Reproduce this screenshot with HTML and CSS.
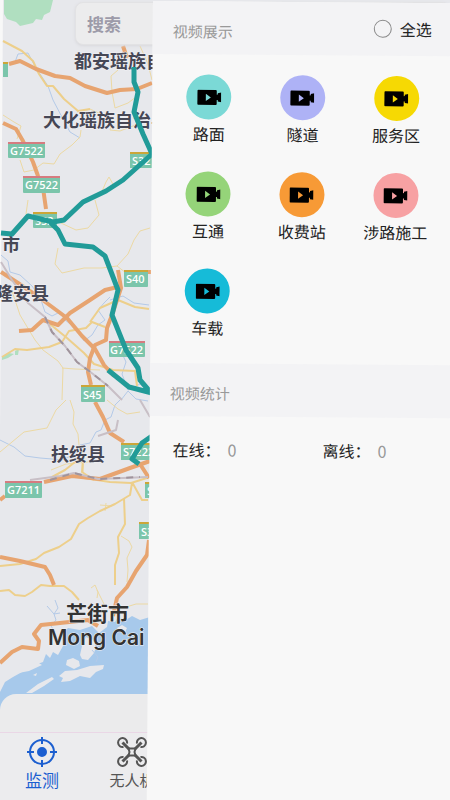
FILE: index.html
```html
<!DOCTYPE html>
<html lang="zh-CN">
<head>
  <meta charset="UTF-8" />
  <meta name="viewport" content="width=device-width, initial-scale=1.0" />
  <title>监测</title>
  <link rel="stylesheet" href="styles.css">
</head>
<body>
  <svg width="0" height="0" class="defs" aria-hidden="true">
    <symbol id="camera" viewBox="0 0 24 16">
      <path fill-rule="evenodd" d="M1 0.5H18.5Q19.5 .5 19.5 1.5V5.2L20.5 5V3.8L24 3V12.6L20.5 12V10.6H19.5V14.5Q19.5 15.5 18.5 15.5H1Q0 15.5 0 14.5V1.5Q0 .5 1 .5ZM8.6 4.4V11.6L13.6 8Z" />
    </symbol>
  </svg>

  <div class="screen">
    <!-- map -->
    <svg class="map" viewBox="0 0 450 800" preserveAspectRatio="xMinYMin slice" role="img" aria-label="地图">
      <path class="land" d="M3 0H450V800H0V430Z" />
      <path class="park" d="M4 0H53L50 12 44 15 42 20 36 19 33 23 20 26 16 22 7 19 4 14Z" />
      <path class="park" d="M2 357L9 353 14 354 8 358 2 360ZM15 351L19 349 18 355 15 355Z" />

      <!-- sea and islands -->
      <path class="sea" d="M0 710V692L5 682 13 677 22 672 32 666 43 662 46 654 50 658 53 652 58 655 63 646 62 634 68 628 80 630 92 626 99 633 107 627 108 621 115 622 118 617 126 620 132 616 140 620 150 617V710Z" />
      <path class="land" d="M66 665L67 660 73 658 79 661 80 666 74 669ZM80 655L82 646 86 637 93 640 96 647 94 653 88 660 82 659ZM59 676L65 671 77 670 90 666 104 665 103 669 96 672 90 678 80 676 70 681 61 682 63 678ZM26 693L38 684 52 677 54 679 44 686 32 693ZM13 674L20 663 34 660 42 665 29 671ZM33 675L37 673 36 676ZM117 628L122 625 127 628 125 632 119 632Z" />

      <!-- rivers -->
      <g class="river">
        <path d="M15 62L18 54 28 53 36 68 48 86 53 100 64 121 70 132 80 138" />
        <path d="M1 255L8 261 10 272 20 275 32 286 40 297 45 312 52 316 60 312 65 320 78 330 84 341 92 335 98 325 105 320 98 310 104 303 110 297" />
        <path d="M0 440L14 447 25 456 40 458 52 459 62 460 75 454 80 445 90 443 96 432 101 430 105 420 111 417 115 405 120 400" />
        <path d="M55 600L58 608 54 614 56 620 51 626 55 632M47 606L54 614 60 613M92 650L98 657 96 662" />
        <path d="M120 349L126 362 122 374 128 390 140 384 150 392M121 400L128 391 136 399 148 401M110 300L123 296 134 303 149 305" />
      </g>

      <!-- minor roads -->
      <g class="lane">
        <path d="M3 115L14 122 21 126 17 139M20 160L24 172 34 170 43 163 54 164 60 154 72 145 80 137 81 130" />
        <path d="M77 112L90 109 103 115 113 119 110 130 120 131 138 124M118 70L111 76 112 92 115 108 128 103 140 94M100 196L106 182 109 177 114 186M140 46L148 64 152 80" />
        <path d="M95 200L99 215 88 228 76 230 61 223M28 200L26 214M58 248L55 264 62 273 84 268 102 268 117 266 128 254 134 240 140 231 150 228M117 266L130 276 145 281" />
        <path d="M12 291L20 315 35 340 43 350 58 361 63 368 62 400M62 368L75 369 100 370M88 340L92 348 90 360" />
        <path d="M0 452L12 442 24 432 47 428 56 410 66 400M70 400L74 412 73 424 78 434 79 445 84 456 83 473M51 470L66 464 98 461" />
        <path d="M121 536L129 541 132 547 127 558 128 570 127 582M91 588L95 585 98 592 97 598M100 505L112 506M105 511L106 503" />
        <path d="M107 400L118 409 127 414 140 412M134 364L136 370 137 386M123 608L136 604 148 604M97 590L104 604" />
      </g>
      <g class="road">
        <path d="M3 41L22 51 33 61 39 74 47 86 53 86 64 99 78 111 90 109" />
        <path d="M2 357L15 349 27 350 49 347 62 342 69 331 86 328 92 322 105 327M90 322L100 308 118 300 135 307 149 309" />
        <path d="M45 320L67 338 84 353 94 364 113 370 135 371 137 386" />
        <path d="M52 477L65 470 80 458M84 478L110 482 131 483 150 477M132 483L130 495 115 504 100 511 88 518 79 524 71 539 59 547 44 553 36 559 20 564 0 566M124 498L125 524 118 537 119 553 115 565 115 585M132 482L142 500 148 500" />
        <path d="M0 591L9 590 15 595 25 596 32 592 41 585 50 586 64 586 72 592 79 600M83 458L82 472 94 480" />
      </g>

      <!-- highways -->
      <g class="highway">
        <path d="M9 64L20 61 36 69 55 76 70 78 85 86 107 93 120 90 137 89 152 83M123 46L127 58" />
        <path d="M3 123L16 129 23 141 33 162 38 176 43 188 46 209" />
        <path d="M1 272L18 283 40 298 67 318 82 336 95 349 104 365 114 376" />
        <path d="M19 331L32 330 43 320 58 325 70 313 90 300 105 290 122 286" />
        <path d="M118 270L121 288 112 315 107 328 106 340 95 345 90 358 88 372 91 385" />
        <path d="M95 402L103 417 110 433 124 442M150 461L130 468 100 479 72 476 44 482M140 464L149 478" />
        <path d="M0 500L5 496M0 557L20 561 45 567 50 575 54 585M149 540L147 555 136 571 127 587 117 598 113 616" />
        <path d="M0 663L12 652 22 647 38 649 39 641 34 634 41 625 60 623 88 620 98 626" />
        <path d="M148 272H152" />
      </g>

      <path class="rail" d="M1 262L12 280 28 303 45 317 52 332 65 346 77 362 93 374 108 386 122 400M140 400L150 417M98 436L116 430 118 420M30 480L60 476 74 473 98 479 148 477" />
      <path class="rail-dash" d="M45 317L52 332 65 346 77 362 93 374 108 386M50 480L74 473 98 479 140 477" />

      <!-- road signs -->
      <g class="sign">
        <rect x="3" y="62" width="5" height="15" />
        <rect x="8" y="142" width="37" height="16" rx="1" />
        <rect x="23" y="176" width="37" height="17" rx="1" />
        <rect x="130" y="152" width="22" height="16" />
        <rect x="33" y="212" width="24" height="16" rx="1" />
        <rect x="124" y="270" width="24" height="17" rx="1" />
        <rect x="109" y="341" width="36" height="16" rx="1" />
        <rect x="81" y="385" width="24" height="17" rx="1" />
        <rect x="121" y="443" width="30" height="17" />
        <rect x="5" y="481" width="37" height="17" rx="1" />
        <rect x="145" y="482" width="8" height="16" />
        <rect x="139" y="522" width="12" height="17" />
        <path class="sign-red" d="M8 143H45M23 177H60M109 342H145M5 482H42" />
        <path class="sign-gold" d="M3 63H8M130 153H152M33 213H57M124 271H148M81 386H105M121 444H151M145 483H153M139 523H151" />
      </g>
      <g class="sign-text">
        <text x="10" y="155">G7522</text>
        <text x="25" y="189">G7522</text>
        <text x="132" y="165">S32</text>
        <text x="35" y="225">S52</text>
        <text x="126" y="283">S40</text>
        <text x="110" y="354">G7522</text>
        <text x="83" y="399">S45</text>
        <text x="123" y="456">S7222</text>
        <text x="7" y="494">G7211</text>
        <text x="147" y="495">S</text>
        <text x="141" y="536">S3</text>
      </g>

      <g class="place">
        <text x="74" y="68">都安瑶族自治县</text>
        <text x="43" y="127">大化瑶族自治县</text>
        <text x="2" y="251">市</text>
        <text x="-5" y="300">隆安县</text>
        <text x="51" y="461">扶绥县</text>
      </g>
      <g class="place city">
        <text x="66" y="621">芒街市</text>
        <text x="48" y="645">Mong Cai</text>
      </g>

      <path class="route" d="M134 67L134 82 138 92 134 112 143 134 152 154 142 163 123 180 106 191 83 202 64 220 53 222 28 216 12 234 1 233M50 222L58 230 65 244 93 247 105 256 118 290 112 315 126 350 138 368 140 380 152 394M108 370L129 387 152 393M152 436L142 443 132 459 139 464" />
    </svg>

    <header class="topbar">
      <input class="search" type="search" placeholder="搜索" aria-label="搜索" />
    </header>

    <footer class="bottom">
      <div class="sheet"></div>
      <nav class="tabs">
        <a class="tab active" href="#monitor">
          <svg viewBox="0 0 30 30" width="30" height="30" aria-hidden="true">
            <circle cx="15" cy="15" r="12" />
            <circle class="dot" cx="15" cy="15" r="4" />
            <path d="M15 0V7M15 23V30M0 15H7M23 15H30" />
          </svg>
          <span>监测</span>
        </a>
        <a class="tab" href="#drone">
          <svg viewBox="0 0 30 30" width="30" height="30" aria-hidden="true">
            <path d="M10 6.5A4.5 4.5 0 1 0 6.5 10M20 6.5A4.5 4.5 0 1 1 23.5 10M10 23.5A4.5 4.5 0 1 1 6.5 20M20 23.5A4.5 4.5 0 1 0 23.5 20" />
            <path class="arm" d="M5.5 5.5L12 12M24.5 5.5L18 12M5.5 24.5L12 18M24.5 24.5L18 18" />
            <path d="M11.5 11.5H18.5L17.5 15 18.5 18.5H11.5L12.5 15Z" />
          </svg>
          <span>无人机</span>
        </a>
      </nav>
    </footer>

    <!-- drawer -->
    <aside class="drawer">
      <div class="section-head">
        <h2>视频展示</h2>
        <label class="check-all"><input type="checkbox" />全选</label>
      </div>
      <div class="types">
        <button class="type" type="button"><span class="disc road-face"><svg><use href="#camera" /></svg></span>路面</button>
        <button class="type" type="button"><span class="disc tunnel"><svg><use href="#camera" /></svg></span>隧道</button>
        <button class="type" type="button"><span class="disc service"><svg><use href="#camera" /></svg></span>服务区</button>
        <button class="type" type="button"><span class="disc junction"><svg><use href="#camera" /></svg></span>互通</button>
        <button class="type" type="button"><span class="disc toll"><svg><use href="#camera" /></svg></span>收费站</button>
        <button class="type" type="button"><span class="disc works"><svg><use href="#camera" /></svg></span>涉路施工</button>
        <button class="type" type="button"><span class="disc vehicle"><svg><use href="#camera" /></svg></span>车载</button>
      </div>
      <div class="section-head">
        <h2>视频统计</h2>
      </div>
      <dl class="stats">
        <div><dt>在线：</dt><dd>0</dd></div>
        <div><dt>离线：</dt><dd>0</dd></div>
      </dl>
    </aside>
  </div>
</body>
</html>
```
FILE: styles.css
```css
* { box-sizing: border-box; }
body {
  margin: 0;
  background: #f8f8f8;
  color: #222;
  font-family: "Noto Sans CJK SC", sans-serif;
}
.defs { position: absolute; }
.screen {
  position: relative;
  display: flex;
  flex-direction: column;
  justify-content: space-between;
  min-height: 100vh;
  overflow: hidden;
}

/* map */
.map { position: absolute; inset: 0; width: 100%; height: 100%; }
.map path { fill: none; stroke-linejoin: round; }
.map .land { fill: #e7e8ec; }
.map .park { fill: #b0dfc0; }
.map .sea { fill: #a7c9eb; }
.river { stroke: #b4cae8; stroke-width: 1; }
.lane { stroke: #ecd9a4; stroke-width: 1; }
.road { stroke: #edcf8b; stroke-width: 2; }
.highway { stroke: #e7a470; stroke-width: 4; }
.rail { stroke: #c8bfc6; stroke-width: 2; }
.rail-dash { stroke: #a0949c; stroke-width: 2; stroke-dasharray: 7 6; }
.route { stroke: #219b98; stroke-width: 5; }
.sign rect { fill: #7bc5ab; }
.sign path { stroke-width: 2; }
.sign-red { stroke: #d67b80; }
.sign-gold { stroke: #cca638; }
.sign-text { fill: #fff; font: 600 11px "Open Sans", sans-serif; }
.place {
  fill: #464755;
  stroke: #f2f2f5;
  stroke-width: 1;
  paint-order: stroke;
  font-size: 18px;
  font-weight: 700;
}
.city { fill: #333; font-size: 21px; font-weight: 600; font-family: Inter, "Noto Sans CJK SC", sans-serif; }

.topbar { position: relative; display: flex; padding: 2px 0 0 75px; }
.search {
  flex: 1;
  min-width: 0;
  height: 43px;
  padding: 0 11px;
  border: 1px solid #e2e2e4;
  border-radius: 8px;
  background: #ececed;
  box-shadow: 0 1px 3px #d8d8dc;
  font: 700 17px "Noto Sans CJK SC", sans-serif;
}
.search::placeholder { color: #9d9ba9; }

/* bottom bar */
.bottom { position: relative; }
.sheet {
  height: 39px;
  background: #ebebec;
  border-bottom: 1px solid #ead7e6;
  border-radius: 16px 0 0 0;
}
.tabs { display: flex; height: 67px; background: #ececee; }
.tab {
  display: flex;
  flex-direction: column;
  align-items: center;
  flex: 0 0 96px;
  padding-top: 4px;
  color: #555;
  font-size: 15px;
  line-height: 26px;
  text-decoration: none;
}
.tab svg { fill: none; stroke: currentColor; stroke-width: 2; }
.tab .dot { fill: currentColor; }
.tab .arm { stroke-width: 3; }
.tab.active { flex-basis: 84px; color: #1c5fd0; font-size: 17px; }

/* drawer, opened slightly askew */
.drawer {
  position: absolute;
  top: 1px;
  bottom: -8px;
  left: 34%;
  right: -10px;
  padding-right: 10px;
  background: #f8f8f8;
  transform: rotate(0.45deg);
  transform-origin: top left;
}
.section-head {
  display: flex;
  align-items: center;
  justify-content: space-between;
  height: 53px;
  margin-right: -10px;
  padding: 6px 28px 0 20px;
  background: #f3f3f5;
}
.section-head h2 { margin: 0; color: #999; font-size: 15px; font-weight: 400; }
.check-all {
  display: flex;
  align-items: center;
  gap: 8px;
  padding-bottom: 8px;
  font-size: 16px;
}
.check-all input {
  appearance: none;
  width: 18px;
  height: 18px;
  margin: 0;
  border: 1px solid #888;
  border-radius: 50%;
}
.types {
  display: grid;
  grid-template-columns: repeat(3, 1fr);
  row-gap: 26px;
  padding: 20px 6px 24px 10px;
}
.type {
  display: flex;
  flex-direction: column;
  align-items: center;
  gap: 2px;
  padding: 0;
  border: 0;
  background: none;
  color: #222;
  font: 16px/24px "Noto Sans CJK SC", sans-serif;
  white-space: nowrap;
  cursor: pointer;
}
.disc {
  display: flex;
  align-items: center;
  justify-content: center;
  width: 45px;
  height: 45px;
  border-radius: 50%;
}
.disc svg { width: 24px; height: 16px; fill: #000; }
.road-face { background: #7bd9d6; }
.tunnel { background: #aeb2f6; }
.service { background: #f6d903; }
.junction { background: #95d479; }
.toll { background: #f79a36; }
.works { background: #f7a1a3; }
.vehicle { background: #16bbd8; }
.stats {
  display: grid;
  grid-template-columns: 1fr 1fr;
  margin: 0 -10px 0 0;
  padding: 21px 0 0 23px;
  column-gap: 16px;
  font-size: 16px;
  line-height: 24px;
}
.stats div { display: flex; gap: 7px; }
.stats dd { margin: 0; color: #999; }
```
